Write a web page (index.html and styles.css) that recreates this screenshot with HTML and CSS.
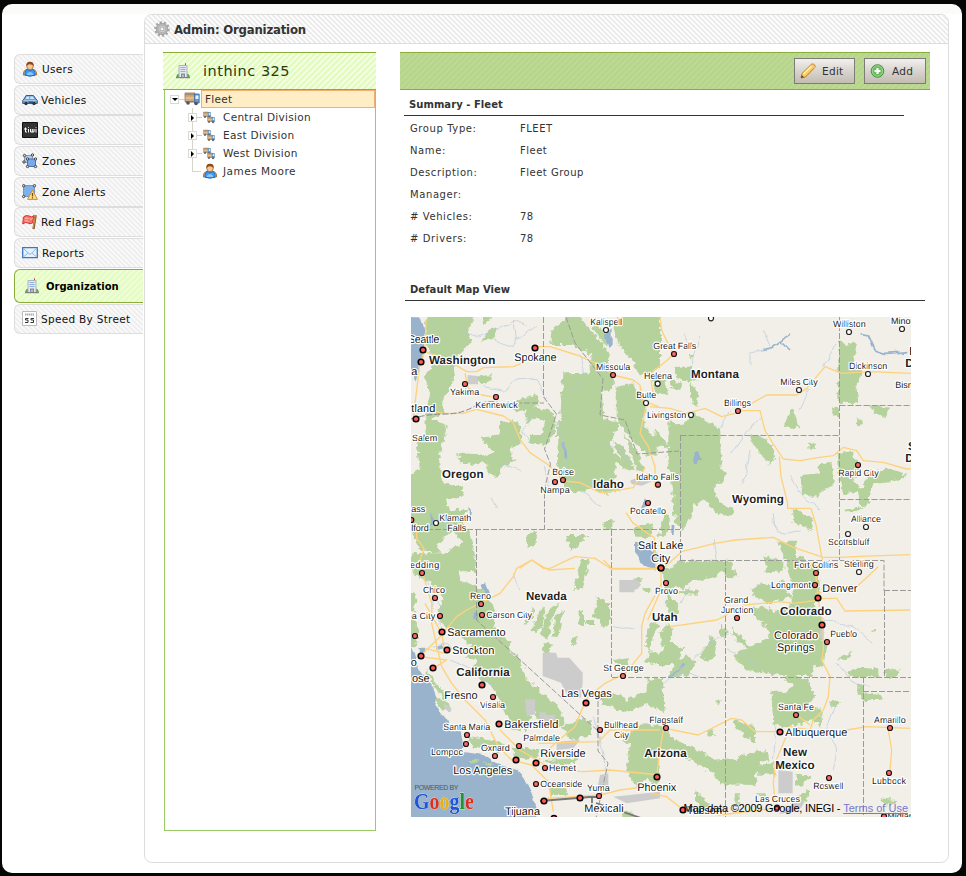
FILE: index.html
```html
<!DOCTYPE html>
<html lang="en">
<head>
<meta charset="utf-8">
<title>Admin: Organization</title>
<link rel="stylesheet" href="styles.css">
</head>
<body>
<svg class="sprites" width="0" height="0" aria-hidden="true">
  <defs>
    <linearGradient id="gold" x1="0" y1="0" x2="1" y2="1"><stop offset="0" stop-color="#fff6b0"/><stop offset="1" stop-color="#f5a81c"/></linearGradient>
    <symbol id="i-user" viewBox="0 0 16 16"><path d="M1.500 14Q1 9 5 8.500h6q4 .5 3.500 5.500z" fill="#f0b06a" stroke="#b5702c"/><path d="M3 14.200V11.500q.5-3 3-3L8 10l2-1.500q2.500 0 3 3v2.700q-5 2-10 0z" fill="#3e9bf5" stroke="#1c6fc8"/><path d="M5 12.500q3-3 6 0v1.500H5z" fill="#8bc6ff"/><ellipse cx="8" cy="5" rx="3.300" ry="3.800" fill="#f6c795" stroke="#a5652f" stroke-width=".8"/><path d="M4.300 5Q4 .7 8 .7T11.700 5Q10 3 7 3.300z" fill="#8a4a1e"/></symbol>
    <symbol id="i-car" viewBox="0 0 16 16"><path d="M.7 8.500L2 7 4 3.500h7.500L14 7l1.300 1.500v3H.7z" fill="#6b9fd6" stroke="#2f5f9b"/><path d="M4.800 4.500h2.500V7H3.400zM8.300 4.500h2.500L12.500 7H8.300z" fill="#cfe4f7"/><path d="M1.500 8.500h13" stroke="#a5cbec"/><circle cx="4" cy="11.500" r="1.700" fill="#333"/><circle cx="12" cy="11.500" r="1.700" fill="#333"/><path d="M6.500 9.500h4.500v1.500H6.500z" fill="#2c538a"/></symbol>
    <symbol id="i-tiwi" viewBox="0 0 16 16"><path d="M.5.5h15v15H.5z" fill="#333" stroke="#111"/><path d="M3.500 5.500v4.500h1.500M2 7h3M6.500 7v3.500M6.500 5.300v.7M8.500 7v3h3.500V7M10.300 7v3M14 7v3.500M14 5.300v.7" stroke="#fff" fill="none"/></symbol>
    <symbol id="i-zone" viewBox="0 0 16 16"><path d="M2.500 2.500h8v7h-8z" fill="#a9caf4" stroke="#8a9bb5"/><path d="M5.500 6h8v7.500h-8z" fill="#79a9ed" stroke="#4876b5"/><g fill="#ddd" stroke="#444"><circle cx="2.500" cy="2.500" r="1.200"/><circle cx="10.500" cy="2" r="1.200"/><circle cx="2" cy="9" r="1.200"/><circle cx="5.500" cy="6" r="1.200"/><circle cx="13.500" cy="6" r="1.200"/><circle cx="5.500" cy="13.500" r="1.200"/><circle cx="13.500" cy="13.500" r="1.200"/></g></symbol>
    <symbol id="i-alert" viewBox="0 0 16 16"><path d="M1.500 1.500h11v11h-11z" fill="#7fb0ee" stroke="#6a9ad8"/><g fill="#ddd" stroke="#444"><circle cx="1.700" cy="1.700" r="1.200"/><circle cx="12.500" cy="1.700" r="1.200"/><circle cx="1.700" cy="12.500" r="1.200"/></g><path d="M10.500 6l4.900 9.400H5.600z" fill="#ffdf86" stroke="#d78d24" stroke-linejoin="round"/><path d="M10.500 9v3.500M10.500 13.300v1.200" stroke="#74501b" stroke-width="1.300"/></symbol>
    <symbol id="i-flag" viewBox="0 0 16 16"><path d="M13.700 1l-2.200 14" stroke="#8f5d20" stroke-width="2.300"/><path d="M13.400 1l-2.200 13" stroke="#dba455" stroke-width=".8"/><path d="M12 1.500Q10 4 7 2 4 .5 1.500 3L.7 10Q4 7.500 6 9t4.500 0z" fill="#f1776f" stroke="#d8322d"/><path d="M3 4.500q2-1 3.500 0M3 7q2-.7 3.500.5M8 5q1.500.5 2.500-.5" stroke="#ffc2bc" fill="none"/></symbol>
    <symbol id="i-mail" viewBox="0 0 16 16"><path d="M.7 2.700h14.600v10H.7z" fill="#e6f2ff" stroke="#3c78bd" stroke-width="1.300"/><path d="M2 4l6 5.500L14 4M2 11.500l4-3.500M14 11.500L10 8" fill="none" stroke="#8cb8e6"/></symbol>
    <symbol id="i-org" viewBox="0 0 16 16"><path d="M1 14.500l1-3 2-1v4zM15 14.500l-1-3-2-1v4z" fill="#55a84c"/><path d="M4 2.500h8v12H4z" fill="#e3e9f3" stroke="#a5adb8" stroke-width=".9"/><path d="M5.500 4.500h5M5.500 6.500h5M5.500 8.500h5" stroke="#8cb1e3"/><path d="M6 14.500v-4h4v4z" fill="#858b93"/><path d="M7.200 14.500v-2.800h1.600v2.800z" fill="#c3cad1"/><path d="M10.500 2V.3" stroke="#d33"/><path d="M1 14.700h14" stroke="#777"/></symbol>
    <symbol id="i-speed" viewBox="0 0 16 16"><path d="M.5.5h14v14H.5z" fill="#fff" stroke="#bbb"/><path d="M3 3.500h9.500" stroke="#aaa" stroke-width="1.800" stroke-dasharray="1.400 .5"/><path d="M6.500 7.500h-3V9h2.500v2.500H3M12 7.500H9V9h2.500v2.500h-3" fill="none" stroke="#333"/></symbol>
    <symbol id="i-truck" viewBox="0 0 16 16"><path d="M1 2h10v8.500H1z" fill="#d3a878" stroke="#8d7152" stroke-width=".8"/><path d="M1.500 2.500h9v1.800h-9z" fill="#a98b6b"/><path d="M1.500 7h9" stroke="#eed2ad"/><path d="M10.500 3h4.700v9h-4.700z" fill="#5f9bd2" stroke="#3a6c9e" stroke-width=".8"/><path d="M11.500 4.500h3v3.500h-3z" fill="#def2ff"/><path d="M1 11h10" stroke="#777"/><circle cx="4" cy="12" r="1.800" fill="#555"/><circle cx="12" cy="12.500" r="1.800" fill="#555"/></symbol>
    <symbol id="i-gear" viewBox="0 0 16 16"><circle cx="8" cy="8" r="6.600" fill="none" stroke="#aaa" stroke-width="2.500" stroke-dasharray="2.200 1.900"/><circle cx="8" cy="8" r="4.500" fill="#ddd" stroke="#b5b5b5" stroke-width="3"/><circle cx="8" cy="8" r="5.800" fill="none" stroke="#8e8e8e" stroke-width=".5"/><circle cx="8" cy="8" r="2" fill="#f5f5f5" stroke="#999" stroke-width=".8"/></symbol>
    <symbol id="i-pencil" viewBox="0 0 16 16"><path d="M1 15l1-4.500L11.500 1.200q2-.8 3.300 1 .8 1.500-.2 2.500L5.500 14z" fill="url(#gold)" stroke="#c77a1b"/><path d="M3.500 11l8-8" stroke="#fff4a3" stroke-width="1.500"/><path d="M11 2.500l3 3 1-1.500-2.500-2.500z" fill="#f6c4a2"/><path d="M1 15l.8-3L4 14.300z" fill="#6b3c15"/></symbol>
    <symbol id="i-add" viewBox="0 0 16 16"><circle cx="7.500" cy="8" r="6.300" fill="#6cbd60" stroke="#499342"/><circle cx="7.500" cy="8" r="5.200" fill="none" stroke="#a6dd9c" stroke-width=".8"/><path d="M7.500 5v6M4.500 8h6" stroke="#fff" stroke-width="2.200"/></symbol>
  </defs>
</svg>

<div class="page">
  <nav class="side">
    <a class="tab"><svg class="ico"><use href="#i-user"/></svg><span>Users</span></a>
    <a class="tab near"><svg class="ico"><use href="#i-car"/></svg><span>Vehicles</span></a>
    <a class="tab"><svg class="ico"><use href="#i-tiwi"/></svg><span>Devices</span></a>
    <a class="tab"><svg class="ico"><use href="#i-zone"/></svg><span>Zones</span></a>
    <a class="tab"><svg class="ico"><use href="#i-alert"/></svg><span>Zone Alerts</span></a>
    <a class="tab near"><svg class="ico"><use href="#i-flag"/></svg><span>Red Flags</span></a>
    <a class="tab"><svg class="ico"><use href="#i-mail"/></svg><span>Reports</span></a>
    <a class="tab active"><svg class="ico"><use href="#i-org"/></svg><span>Organization</span></a>
    <a class="tab near"><svg class="ico"><use href="#i-speed"/></svg><span>Speed By Street</span></a>
  </nav>

  <main class="panel">
    <header class="title"><svg class="ico"><use href="#i-gear"/></svg><h1>Admin: Organization</h1></header>
    <div class="content">
      <section class="tree">
        <div class="tree-head"><svg class="ico"><use href="#i-org"/></svg><h2>inthinc 325</h2></div>
        <div class="tree-body">
          <div class="node root"><i class="toggle open"></i><svg class="ico"><use href="#i-truck"/></svg><span class="picked">Fleet</span></div>
          <div class="kids">
            <div class="node"><i class="toggle"></i><span class="pair"><svg><use href="#i-truck"/></svg><svg><use href="#i-truck"/></svg></span><span>Central Division</span></div>
            <div class="node"><i class="toggle"></i><span class="pair"><svg><use href="#i-truck"/></svg><svg><use href="#i-truck"/></svg></span><span>East Division</span></div>
            <div class="node"><i class="toggle"></i><span class="pair"><svg><use href="#i-truck"/></svg><svg><use href="#i-truck"/></svg></span><span>West Division</span></div>
            <div class="node leaf"><i class="elbow"></i><svg class="ico"><use href="#i-user"/></svg><span>James Moore</span></div>
          </div>
        </div>
      </section>

      <section class="detail">
        <div class="bar">
          <button class="btn edit"><svg class="ico"><use href="#i-pencil"/></svg>Edit</button>
          <button class="btn add"><svg class="ico"><use href="#i-add"/></svg>Add</button>
        </div>
        <h3 class="summary">Summary - Fleet</h3>
        <dl>
          <dt>Group Type:</dt><dd>FLEET</dd>
          <dt>Name:</dt><dd>Fleet</dd>
          <dt>Description:</dt><dd>Fleet Group</dd>
          <dt>Manager:</dt><dd></dd>
          <dt># Vehicles:</dt><dd>78</dd>
          <dt># Drivers:</dt><dd>78</dd>
        </dl>
        <h3 class="mapview">Default Map View</h3>
        <div class="map">
<svg class="canvas" viewBox="411 317 500 500" width="500" height="500">
  <defs>
    <filter id="rough" x="0" y="0" width="1" height="1" color-interpolation-filters="sRGB"><feTurbulence type="fractalNoise" baseFrequency=".2" numOctaves="2" seed="4"/><feDisplacementMap in="SourceGraphic" scale="7" xChannelSelector="R" yChannelSelector="G"/></filter>
    <filter id="rough2" x="0" y="0" width="1" height="1" color-interpolation-filters="sRGB"><feTurbulence type="fractalNoise" baseFrequency=".08" numOctaves="2" seed="9"/><feDisplacementMap in="SourceGraphic" scale="6" xChannelSelector="R" yChannelSelector="G"/></filter>
    <g id="t"><circle r="7.500" fill="#f66" stroke="#111" stroke-width="3.500"/></g>
    <g id="T"><circle r="8.500" fill="#f55" stroke="#000" stroke-width="4.500"/></g>
    <g id="o"><circle r="7.500" fill="#fff" stroke="#222" stroke-width="3.500"/></g>
  </defs>
  <path class="land" d="M411 317h500v500H411z"/>
  <g filter="url(#rough)">
    <path fill="none" d="M401 307h520v520H401z"/>
    <g class="green">
      <g transform="translate(400 310) scale(.33333)">
        <path d="M80 0H232L205 60 215 95 180 130 160 165 165 200 150 230 125 280 135 310 90 325 140 345 130 400 115 440 125 480 130 520 185 530 190 555 140 570 150 600 200 600 190 640 215 680 225 740 190 700 160 660 110 700 120 730 60 720 23 640 23 500 60 480 50 400 80 370 75 320 90 250 75 200 110 150 75 100z"/>
        <path d="M240 0H300L250 45zM265 60l30-10-10 30-45 20zM225 200l50-5 0 20-30 10zM335 280l70-30 15 30-35 20-40 10z"/>
        <path d="M390 290l55 10 25 20-10 60-25 25-50-10 10-20 30 0 10-40-25-15-30 25-5-30z"/><path d="M300 340l50-8 15 30-60 18zM240 385l60-12 0-25 60 0 5 50-35 20 15 35-40 20-10 30-30-15 0-30-85 5-5-20 20-10 45 8 45-15z"/><path d="M170 430l60 2 40 20-50 10z"/>
        <path d="M455 60l35-25 40 20 45 50-15 20-45-20-65 0z"/><path d="M490 190l70-2 45 30 5 110 50 10-30 60 20 55-10 70 25 20-50 10-50-20-20 15-50-10-20-70-5-110 10-30z"/>
        <path d="M500 12l40 10 50 60 40 50-10 30-45-20-40-50-45-50zM640 60l10-48h130v160l-60 25-25-50-30-30z"/><path d="M575 140l50 20 20 60-20 30-60-50zM650 230l50-10 40 70-10 50 40 50 0 50-30-5-60-65-30-40z"/>
        <path d="M590 40l30 40 0 30-40-50zM470 340l15 30 10 80-15-10zM610 400l45 40 50 40-20 5-50-40zM640 390l30 20 30 60-10 10-30-40zM670 370l45 60 20 60-25-10zM610 630h30l-5 30-20 0zM695 655l65-15-10 40-40 0zM385 665h30l-10 40-25 5zM495 675h70l-20 20-30 25z"/>
      </g>
      <g transform="translate(650 310) scale(.33333)">
        <path d="M75 170h50l20 40-40 5-30-20zM5 200l40 5 10 50-40-10zM60 210l40 10-10 20-30-10zM120 215l25 30-5 45-15-10zM15 355l35 45 30 10-70 0zM115 130l20 5-15 10z"/>
        <path d="M55 330l45 15 30-35 80 45 5 70-5 55 20 10-15 25-25 15 15 45 45 25-5 20-50-10-30-40-35 15-10 40-20 35-25-20 5-50-15-60-15-90 5-30z"/>
        <path d="M300 375h30l35 30 10 50-15 10-30-35-25-35zM400 350l28-55 20 60zM565 90l25 15 30-10 0 30-20 45 35 5-15 65 5 35-20 5-40-3z"/>
        <path d="M455 495l50-5 5-30 38-5 0 75-35 15-10 20-45-15zM478 398h20v18h-20zM560 430l40-10 30 45-5 40-20 5 30 25 20-45 60-15 55 20-20 15-80 10-20 70-20-5-10-40-40 10-15-60zM425 595l65 35-5 30-55-25zM385 695l50 0 5 60-40-10zM655 285l65 8-15 30-30-15zM580 600l60-10-30 22zM550 290l15 10 0 20-15-5zM620 320l20 20-15 10z"/>
        <path d="M45 605l15 20-10 55-25 0zM5 690l30 60-30 10zM65 540l20 60-15 20zM80 752h165v35H60zM340 735l60 20 0 30h-50z"/>
      </g>
      <g transform="translate(400 560) scale(.33333)">
        <path d="M33-20l90 0 90-40 20 100-60-10 10 30 40 15 30 20 30 50 0 60 40 50 20 40 30 60 -5 60 20 60-50-35-20-60-50-20 0-50-70-20 20-30-60-50-40-20-5-40 20-30-40-50-50-25z"/>
        <path d="M205 230l80-10 60 75 0 60 40 60 5 55-10 40-40 0-40-90-30-45-60-40 20-30z"/><path d="M20 90l27 10-5 60-22 0zM20 150l30 40 5 60-35 20zM80 330l60 80-5 15-55-80zM100 405l50 30 0 20-35-15z"/>
        <path d="M330 275l30 20 20 65 30 20 40 40 20 10 25 60-20 15-60-25-30-50-60-70-15-50z"/><path d="M275 215l30 10 30 30-20 10z"/>
        <path d="M390 155l15-15-5 40-30 15zM420 150l15-10-10 60-20 20-10-10zM440 155l35-25-20 50-10 60-25-15zM465 170l25-20-15 80-15 0zM535 150h17v45h-15zM590 110l25 10-10 60-25-10zM545 0h25l-25 85-25 5zM430 250l28 0-15 35-12-5zM515 230h23l-20 35zM555 180l30 0 0 15-30 0z"/>
        <path d="M200 530l100 15 25 15-20 15-85-15zM335 560l85 8-10 25-65 5zM485 500l60-25 30 10 0 40-60 15zM430 600l110-5-15 18-70 0zM440 670l60 15 5 20-50 0z"/>
      </g>
      <g transform="translate(600 540) scale(.33333)">
        <path d="M185 90l40-10 25-20 100 3 15 10-10 35-60 15-25 0-20 25-20-10-20 10 0 20 25 30-5 40-20 0-10-40z"/><path d="M235 150l60 2-3 12-50-2zM130 140l25 5-5 12-20-2zM105 115l18 0-2 12-15 0z"/>
        <path d="M150 245l30 10-20 30-10 50-15-20zM180 280l25-30 15 15-10 50-25 0zM205 300l45 25-20 50-60 0-35-10 20-35 20 15zM260 345l25 25 40-60 5-25 20 20-5 40-20 20-30-10-30 50-60 5 30-50zM360 250l20 20-5 30-15-10zM40 360l45-5 0 20-40 0zM0 180l30 10 0 60-25 10z"/>
        <path d="M370 100l25-20 20 25-30 10zM450 150l35-20 45 10 15-20 30 50-70 20-40-20z"/><path d="M435 205l60-5 30 15 60-15 45 45-10 40 60 20-10 80-60-20-100-25-80-15 60-15 20-20-20-40z"/>
        <path d="M395 265l40 35 20 30-50-30zM400 345l40-20 60-30 40 40 100 20 0 50-100 0-100-15z"/>
        <path d="M0 460l50 0 30 20 60-30 0-30 45-5 10 105-60-30-55 30-80-30z"/><path d="M345 485l20-5-10 15z"/>
      </g>
      <g transform="translate(600 680) scale(.33333)">
        <path d="M135 130l60 10 25 40 60 20 65 40 30-5 35 5 15-15 45-5 15 45-20 20 5 30-110-2-20-35-50-25-70-45-50 0 5 50 5 40-10 15-30-15-30 20-20-25-10-30 10-70-30-20z"/>
        <path d="M105 150l25 5 5 35-20 10zM320 155l15-8 10 20-25 5zM405 120l60 20 0 45-30-15-30-30zM440 220l60-10 5 35-20-5-40 0zM470 255l50-5 10 40-30-10-25 5zM285 330l45 45-15 15-30-30zM405 340l15 0-5 40-12-20zM70 395l30 0 0 20-30 0zM470 340l30 0 -10 15z"/>
      </g>
      <g transform="translate(650 560) scale(.33333)">
        <path d="M405 0l50-10 50 30 5 80-20 30 30 60 0 60-30 10-90-50-50 0-10-50 80-10 10-60z"/>
        <path d="M365 395l40 0 30-20-35-20 20-15 55 20 20 50-20 25 40 15 0 50-30-20-60 20-55-5zM400 270l50-20 40 30-30 30-40 0zM595 335l40-15 50 5 0 28-85-3zM705 328l45 0-15 25-28 0zM625 370l15 15 0 15 55 5 0 15-55 0-15-20zM540 430l30-10-10 20-20 0zM570 290l40-15-20 25-25-2zM665 210l10-3 0 8z"/>
        <path d="M440 710l40-20-10 40zM440 640l45 10-30 25-20 10zM690 715l50 5-30 20z"/>
      </g>
    </g>
  </g>
  <g class="grey" transform="translate(400 310) scale(.33333)"><path d="M203 195l28 3 4 25-32 0zM690 512l60-25 10 25-35 15-30-5z"/></g>
  <g class="grey" transform="translate(400 560) scale(.33333)"><path d="M428 278h40l5 15h35l40 45v30l-5 45-40-5-20-40-55-20zM658 60h42l0-6 15 8 8 12-10 12-10 4v7h-45zM375 418h30v45l-25 5zM418 457l20 0 0 8 28 0 0 18-48 0zM600 645l25-5 0 40-35 15zM470 545l70-5-20 25-50 5zM640 710l140-15v20l-100 15zM130 430l25 15-5 12-15-10z"/></g>
  <g class="grey" transform="translate(650 560) scale(.33333)"><path d="M385 630l43 5 0 65-43 0zM430 722l35 0-10 20-30 15-40 5 35-20zM510 195l10 0 0 45-10-10z"/></g>
  <g filter="url(#rough2)">
    <path fill="none" d="M401 307h520v520H401z"/>
    <g transform="translate(400 560) scale(.33333)">
      <path class="water" d="M0 245l35 20 25 65 40 55 8 30 -5 20 30 35 20 30 30 20 5 25 -3 30 30 5 35 5 30 20 30 10 40 15 20 20 30 60 10 60 5 40H0z"/>
      <path class="water" d="M55 260l20 0 0 25-15 10zM245 75l10-5 12 30-12 5zM222 155l10 5-2 22-10-5zM108 260l15-5 5 10-18 5z"/>
      <path class="green" d="M205 600l30 0-10 10zM245 606l38 5-10 6z"/>
    </g>
    <g class="water" transform="translate(400 310) scale(.33333)"><path d="M25 22l38 0 10 40 0 60-15 50-10 40-13-20-10-50zM615 75l20-20 0 50-10 5zM705 695l30 5 25 30 10 50-45-20-20-35zM488 400l8 0 3 45-8-5zM735 565l10 15-10 12-15 3zM90 605l15 30-10 15zM205 590l8 10-5 30z"/></g>
    <g class="water" transform="translate(650 310) scale(.33333)"><path d="M128 425l12-5 8 20 10 10-15 0-5 15-12-5zM65 645l8 0-2 30-8 0z"/></g>
    <g class="stream">
      <g transform="translate(650 310) scale(.33333)"><path class="wide" d="M340 118l25-5 40-30 15-10M390 90l30 30M630 70l25 5 20 45 30 10 70-5"/><path d="M300 165l0-35 60-15M150 75l-30 110M560 100l-20 30-20 40M245 430l40-60 50-50M300 420l-10 70-20 30M370 610l5 50 30 10 50-10M420 500l30 50 60 50M190 690l10 70M340 60l20 50M480 240l-30 60M240 300l-30 60M100 70l20 50"/></g>
      <g transform="translate(400 310) scale(.33333)"><path d="M180 60l50 20 60-20 60-30 30 20M250 230l60 10 40-30 60-5 30 60M280 90l60 20 15-30M400 310l-30 50 20 40M470 330l30 100-5 60M430 470l20 80M140 180l30-30M340 30l10 60 60-40M600 400l70 20 20 50M520 480l20 60 60 50M540 130l10 60-30 60M100 30l5 60-20 60M300 460l60 20M270 560l20 30"/></g>
      <g transform="translate(400 560) scale(.33333)"><path d="M70 20l20 60 30 60 5 70M100 90l-10 90M140 260l60 20 40-10M150 300l70 30 60-5M90 260l50-10 30 30M340 40l20 50M220 340l60 40M580 470l20 70 20 100M640 200l60 10"/></g>
      <g transform="translate(650 560) scale(.33333)"><path class="wide" d="M55 350l30-15 20-25"/><path d="M0 430l40-60 30-30 60-40 60-60 50-20M230 270l60 20 40 30M560 430l-30 80 30 60-10 60M510 170l100 30 60 50M420 130l0 60M380 500l-10 100M560 310l40 50 60 20M120 80l-30 50M70 350l50-10 50 20"/></g>
    </g>
  </g>
  <g class="road">
    <g transform="translate(400 310) scale(.33333)"><path d="M78 30L75 120 60 160 40 320M75 125l40 15 60 30 25 15 30 0 20-12 90-3 30-12 35-30M410 110l40 0 80 25 60 25 50 35 60 15 20 15 5 45 50 20M195 190l10 45 40 20 30 5M50 310l40-10 40 10 60 0 40-12 80 20 30 20 20 50 30 40 60 40 40 45 50 5 60 30 10 0 90-15 35-60M678 608l20 30 50 35 15 10 5 90M725 250l15 30-20 90 25 40 20 60 0 60M50 640l0 45 22 30-15 45M360 775l35-25 35 25 20 0M450 775l75-35 60 5 50 32 130 0"/></g>
    <g transform="translate(650 310) scale(.33333)"><path d="M30 22l5 40 15 30 20 40-20 20-50 40 10 60M0 290l60 5 50 15 55-15 50 25 40-10 25-8 50 0 15 60 25 40 30 45 50 5 60-10 40-5 30-25 40 10 20 30 60 5 70 20 80-3M270 300l80-45 90 0 30-20 55-65 50 20 90-5 120 5M388 440l5 60 20 80 0 15 70 0 15 50 20 110M45 770l50-45 100-25 60-10 115-8 60 30 90 30 50 0 60-3 150-5"/></g>
    <g transform="translate(400 560) scale(.33333)"><path d="M65 30l30 100 0 60 30 130 30 50 40 50 60 60 40 80 40 40 60 15 50 50 15 90M240 130l-40 20-30 20-50 60-50 50M240 130l60-30 40-50 10-25 45-25 50 30 80-5M75 130l50 90 10 60-60-15M300 510l60 60 100 60 90 5 80-5 150 15M405 610l60-60 60-50 20-50 20-40 50-40 60-30 50-60 0-80 10-40 50-90M60 290l80 10-40 25M415 550l180-5 35-35 150 0M440 715l160-10 60-15 120-15M610 0l25 25 145 0"/></g>
    <g transform="translate(650 560) scale(.33333)"><path d="M60 200l140-20 20-10 60-35 110-10 40 5 80-10M495 20l10 100 15 80 0 70-5 30 25 50-5 60-15 40-30 30-10 30-60-10-20 50-25 60-5 60 5 50M33 20l0 70-40 90M500 115l60 0 25 38 195-3M495 100l40-5 80-10 70-65M45 505l100 20 100-50 30 5 40 35 65 0M440 465l40 30M590 510l60-10 130 5M715 510l10 60-5 60M0 700l50 10 50 40 110 15 160-20M40 510l-10 60-10 80"/></g>
  </g>
  <g class="state">
    <path d="M543.500 317v80l13 17-12 35 6 15-6 25v40M411 529.500h269M476.500 530v90L598 731v20l10 12-12 55M611.500 530v147M612 677.500h299M680.500 435v125M680.500 435.500h159M839.500 317v243M839.500 405.500H911M839.500 499.500H911M680 560.500h204v30M884.500 590v87M884 590.500h27M725.500 560v257M863.500 677v138M863 691.500h48M566 317l9 26 28 36 -3 36 25 5 12 34 42-3M500 403l44-0M598 731l0-30 14-10"/>
    <path class="border" d="M540 801l50-4 8 0M592 797v8M596 803l48 16"/>
    <path class="river" d="M411 419q15-5 34-5t33-10q12-4 22-1"/>
  </g>
  <g class="names">
    <g transform="translate(400 310) scale(.33333)">
      <text class="m" x="24" y="100" textLength="94">Seattle</text><text class="b" x="87" y="161" textLength="199">Washington</text><text class="m" x="34" y="195">a</text><text class="s" x="150" y="255" textLength="88">Yakima</text><text class="s" x="226" y="294" textLength="127">Kennewick</text><text class="m" x="343" y="154" textLength="127">Spokane</text><text class="s" x="571" y="45" textLength="95">Kalispell</text><text class="s" x="588" y="181" textLength="103">Missoula</text><text class="s" x="709" y="264" textLength="60">Butte</text><text class="m" x="34" y="306" textLength="72">tland</text><text class="s" x="36" y="393" textLength="76">Salem</text><text class="b" x="126" y="504" textLength="125">Oregon</text><text class="s" x="457" y="495" textLength="65">Boise</text><text class="s" x="421" y="549" textLength="88">Nampa</text><text class="b" x="579" y="533" textLength="93">Idaho</text><text class="s" x="34" y="606">ass</text><text class="s" x="118" y="632" textLength="96">Klamath</text><text class="s" x="142" y="663">Falls</text><text class="s" x="34" y="663">lford</text><text class="s" x="708" y="510" textLength="129">Idaho Falls</text><text class="s" x="690" y="612" textLength="108">Pocatello</text><text class="m" x="714" y="717" textLength="136">Salt Lake</text><text class="m" x="754" y="755">City</text><text class="s" x="30" y="774" textLength="88">edding</text><text class="s" x="732" y="207" textLength="84">Helena</text><text class="s" x="741" y="324" textLength="118">Livingston</text>
      <use href="#T" x="69" y="120"/><use href="#T" x="63" y="156"/><use href="#t" x="195" y="222"/><use href="#t" x="288" y="261"/><use href="#T" x="405" y="114"/><use href="#o" x="618" y="60"/><use href="#t" x="639" y="195"/><use href="#o" x="773" y="221"/><use href="#o" x="738" y="279"/><use href="#T" x="48" y="327"/><use href="#t" x="465" y="516"/><use href="#t" x="489" y="510"/><use href="#t" x="774" y="524"/><use href="#t" x="744" y="579"/><use href="#t" x="34" y="630"/><use href="#o" x="108" y="639"/><use href="#T" x="783" y="774"/>
    </g>
    <g transform="translate(650 310) scale(.33333)">
      <text class="s" x="10" y="117" textLength="129">Great Falls</text><text class="b" x="123" y="203" textLength="144">Montana</text><text class="s" x="391" y="225" textLength="112">Miles City</text><text class="s" x="222" y="288" textLength="81">Billings</text><text class="s" x="549" y="51" textLength="98">Williston</text><text class="s" x="723" y="42">Minot</text><text class="s" x="597" y="177" textLength="115">Dickinson</text><text class="s" x="736" y="234">Bismarck</text><text class="b" x="778" y="135">N</text><text class="b" x="766" y="171">Dakota</text><text class="b" x="774" y="419">S</text><text class="b" x="766" y="456">Dakota</text><text class="s" x="565" y="498" textLength="121">Rapid City</text><text class="b" x="246" y="579" textLength="156">Wyoming</text><text class="s" x="603" y="636" textLength="90">Alliance</text><text class="s" x="534" y="705" textLength="124">Scottsbluff</text><text class="s" x="432" y="774" textLength="133">Fort Collins</text><text class="s" x="582" y="772" textLength="89">Sterling</text>
      <use href="#o" x="183" y="25"/><use href="#t" x="72" y="132"/><use href="#o" x="123" y="315"/><use href="#t" x="264" y="303"/><use href="#o" x="447" y="240"/><use href="#o" x="597" y="66"/><use href="#o" x="756" y="57"/><use href="#o" x="654" y="192"/><use href="#t" x="624" y="465"/><use href="#o" x="648" y="651"/><use href="#o" x="594" y="672"/>
    </g>
    <g transform="translate(400 560) scale(.33333)">
      <text class="s" x="69" y="99" textLength="66">Chico</text><text class="s" x="210" y="117" textLength="63">Reno</text><text class="b" x="378" y="119" textLength="122">Nevada</text><text class="s" x="20" y="176" textLength="86">ba City</text><text class="s" x="259" y="174" textLength="137">Carson City</text><text class="m" x="142" y="227" textLength="175">Sacramento</text><text class="m" x="157" y="281" textLength="126">Stockton</text><text class="m" x="32" y="318">o</text><text class="m" x="36" y="365">ose</text><text class="b" x="169" y="347" textLength="160">California</text><text class="m" x="133" y="416" textLength="100">Fresno</text><text class="s" x="240" y="444" textLength="75">Visalia</text><text class="m" x="313" y="503" textLength="162">Bakersfield</text><text class="s" x="130" y="510" textLength="141">Santa Maria</text><text class="s" x="93" y="585" textLength="96">Lompoc</text><text class="s" x="243" y="573" textLength="86">Oxnard</text><text class="s" x="370" y="543" textLength="110">Palmdale</text><text class="m" x="421" y="590" textLength="136">Riverside</text><text class="m" x="160" y="641" textLength="177">Los Angeles</text><text class="s" x="447" y="633" textLength="81">Hemet</text><text class="s" x="421" y="681" textLength="126">Oceanside</text><text class="s" x="561" y="693" textLength="68">Yuma</text><text class="m" x="553" y="755" textLength="118">Mexicali</text><text class="m" x="315" y="764" textLength="105">Tijuana</text><text class="m" x="484" y="410" textLength="151">Las Vegas</text><text class="s" x="610" y="333" textLength="121">St George</text><text class="s" x="612" y="504" textLength="102">Bullhead</text><text class="s" x="642" y="534" textLength="45">City</text><text class="s" x="748" y="489" textLength="101">Flagstaff</text><text class="b" x="733" y="591" textLength="127">Arizona</text><text class="m" x="712" y="692" textLength="117">Phoenix</text><text class="b" x="756" y="182" textLength="77">Utah</text>
      <use href="#t" x="66" y="39"/><use href="#t" x="105" y="114"/><use href="#t" x="243" y="132"/><use href="#t" x="246" y="165"/><use href="#t" x="120" y="168"/><use href="#T" x="126" y="216"/><use href="#t" x="45" y="228"/><use href="#T" x="141" y="270"/><use href="#T" x="63" y="288"/><use href="#T" x="99" y="324"/><use href="#T" x="246" y="375"/><use href="#t" x="279" y="411"/><use href="#T" x="297" y="492"/><use href="#t" x="201" y="525"/><use href="#t" x="198" y="552"/><use href="#t" x="285" y="588"/><use href="#t" x="357" y="558"/><use href="#T" x="348" y="600"/><use href="#T" x="408" y="609"/><use href="#t" x="435" y="624"/><use href="#t" x="408" y="672"/><use href="#T" x="432" y="723"/><use href="#T" x="540" y="714"/><use href="#t" x="597" y="708"/><use href="#t" x="669" y="348"/><use href="#T" x="558" y="429"/><use href="#t" x="600" y="510"/><use href="#T" x="771" y="651"/><use href="#T" x="462" y="775"/>
    </g>
    <g transform="translate(650 560) scale(.33333)">
      <text class="s" x="15" y="102" textLength="69">Provo</text><text class="s" x="222" y="129" textLength="73">Grand</text><text class="s" x="213" y="159" textLength="97">Junction</text><text class="s" x="363" y="84" textLength="120">Longmont</text><text class="m" x="517" y="96" textLength="105">Denver</text><text class="b" x="390" y="165" textLength="155">Colorado</text><text class="m" x="372" y="236" textLength="132">Colorado</text><text class="m" x="381" y="272" textLength="112">Springs</text><text class="s" x="541" y="231" textLength="80">Pueblo</text><text class="s" x="384" y="450" textLength="108">Santa Fe</text><text class="m" x="406" y="527" textLength="186">Albuquerque</text><text class="b" x="399" y="588" textLength="72">New</text><text class="b" x="376" y="626" textLength="118">Mexico</text><text class="s" x="672" y="489" textLength="95">Amarillo</text><text class="s" x="666" y="671" textLength="102">Lubbock</text><text class="s" x="490" y="687" textLength="90">Roswell</text><text class="s" x="315" y="726" textLength="135">Las Cruces</text><text class="m" x="110" y="761" textLength="106">Tucson</text><text class="s" x="712" y="778">Midland</text>
      <use href="#T" x="33" y="24"/><use href="#t" x="48" y="69"/><use href="#t" x="498" y="39"/><use href="#o" x="627" y="36"/><use href="#t" x="495" y="75"/><use href="#T" x="504" y="114"/><use href="#t" x="261" y="174"/><use href="#T" x="516" y="195"/><use href="#t" x="531" y="246"/><use href="#t" x="438" y="465"/><use href="#T" x="390" y="516"/><use href="#t" x="48" y="504"/><use href="#t" x="720" y="504"/><use href="#t" x="717" y="639"/><use href="#t" x="537" y="654"/><use href="#t" x="381" y="743"/><use href="#T" x="99" y="750"/><use href="#t" x="702" y="769"/>
    </g>
  </g>
  <text class="powered" x="414.500" y="790" textLength="44">POWERED BY</text>
  <text class="google" x="414" y="809" textLength="60" lengthAdjust="spacingAndGlyphs"><tspan fill="#1f55d8">G</tspan><tspan fill="#d8301f">o</tspan><tspan fill="#e8b010">o</tspan><tspan fill="#1f55d8">g</tspan><tspan fill="#1f9630">l</tspan><tspan fill="#d8301f">e</tspan></text>
</svg>
          <div class="credit">Map data ©2009 Google, INEGI - <a>Terms of Use</a></div>
        </div>
      </section>
    </div>
  </main>
</div>
</body>
</html>
```
FILE: styles.css
```css
* { box-sizing: border-box; }
body {
  margin: 0;
  height: 876px;
  padding: 4px 4px 3px 2px;
  background: #060606;
  color: #333;
  font: 10.5px/18px "DejaVu Sans", sans-serif;
  letter-spacing: .3px;
  overflow: hidden;
}
h1, h2, h3, dl, dd { margin: 0; }
.sprites { display: block; height: 0; }
.ico { width: 16px; height: 16px; flex: none; }

.page {
  display: flex;
  height: 869px;
  padding: 10px 13px 0 12px;
  background: linear-gradient(#fbfbf9 10px, #fff 10px);
  border-radius: 10px;
}

/* Side navigation */
.side { width: 129px; padding-top: 40px; display: flex; flex-direction: column; gap: .7px; }
.tab {
  display: flex;
  align-items: center;
  gap: 4px;
  height: 30px;
  padding-left: 7px;
  color: #111;
  white-space: nowrap;
  border: 1px solid #ddd;
  border-right: 0;
  border-radius: 6px 0 0 6px;
  background: linear-gradient(45deg, #fafafa 6%, #eee 19% 31%, #fafafa 44% 56%, #eee 69% 81%, #fafafa 94%) 0 0 / 5px 5px;
}
.tab.near { gap: 3px; }
.tab.active {
  height: 34.500px;
  padding-left: 9px;
  gap: 6px;
  color: #000;
  font-weight: bold;
  font-size: 10px;
  letter-spacing: 0;
  border-color: #8aad3c;
  background: linear-gradient(-45deg, #f0fedd 10%, #e5fdc5 10% 50%, #f0fedd 50% 60%, #e5fdc5 60%) 0 0 / 6px 6px;
}
.tab.active span { padding-top: 1px; }

/* Main panel */
.panel { width: 805px; height: 849px; margin-left: 1px; border: 1px solid #ddd; border-radius: 8px; overflow: hidden; }
.title {
  display: flex;
  align-items: center;
  gap: 4px;
  height: 29px;
  padding-left: 9px;
  border-bottom: 1px solid #ddd;
  background: linear-gradient(45deg, #fff 6%, #eaeaea 19% 31%, #fff 44% 56%, #eaeaea 69% 81%, #fff 94%) 0 0 / 5px 5px;
}
.title h1 { font: bold 13px/18px "DejaVu Sans Condensed", "DejaVu Sans", sans-serif; letter-spacing: -.2px; padding-top: 1px; }
.content { display: flex; gap: 24px; padding: 8px 0 0 18px; }

/* Tree */
.tree { width: 213px; }
.tree-head {
  display: flex;
  align-items: center;
  gap: 12px;
  height: 38px;
  padding-left: 12px;
  border-top: 1px solid #8aad3c;
  border-bottom: 1px solid #8aad3c;
  background: linear-gradient(-45deg, #f7ffea 10%, #e4fcc2 10% 50%, #f7ffea 50% 60%, #e4fcc2 60%) 0 0 / 6px 6px;
}
.tree-head h2 { font-weight: normal; font-size: 14.500px; letter-spacing: .5px; color: #2a3a10; }
.tree-body { height: 741px; margin-left: 1px; border: 1px solid #9c6; border-top: 0; }
.node { display: flex; align-items: center; height: 18px; white-space: nowrap; }
.root { padding-left: 5px; }
.toggle { position: relative; width: 9px; height: 9px; flex: none; border: 1px solid #d9d9d0; background: #fff; }
.toggle::before { content: ""; position: absolute; left: 2px; top: 1px; border-left: 3px solid #000; border-top: 3px solid transparent; border-bottom: 3px solid transparent; }
.toggle.open::before { left: 1px; top: 2px; border: 3px solid transparent; border-top: 3px solid #000; border-bottom: 0; }
.toggle::after { content: ""; position: absolute; left: 8px; top: 3px; width: 5px; height: 1px; background: #d0d0c8; }
.root .ico { margin: 0 1px 0 5px; }
.picked { flex: 1; height: 18px; padding-left: 3px; line-height: 17px; border: 1px solid #f0b070; background: #ffedc6; }
.kids { margin-left: 27px; background: linear-gradient(#d5d5cc, #d5d5cc) 0 0 / 1px 64px no-repeat; }
.kids .toggle { margin-left: -4px; }
.pair { position: relative; width: 12px; height: 13px; margin: 0 8px 0 6px; flex: none; }
.pair svg { position: absolute; left: 0; top: 0; width: 8px; height: 8px; }
.pair svg + svg { left: 4px; top: 5px; }
.elbow { width: 9px; height: 1px; background: #d5d5cc; }
.leaf .ico { margin: 0 5px 0 1px; }
.leaf span { letter-spacing: .5px; }

/* Detail */
.detail { width: 530px; }
.bar {
  display: flex;
  justify-content: flex-end;
  align-items: center;
  gap: 9px;
  height: 38px;
  padding-right: 4px;
  border-top: 1px solid #8aad3c;
  border-bottom: 1px solid #8aad3c;
  background: linear-gradient(-45deg, #bfda98 10%, #b8d58c 10% 50%, #bfda98 50% 60%, #b8d58c 60%) 0 0 / 6px 6px;
}
.btn {
  display: flex;
  align-items: center;
  gap: 6px;
  width: 61px;
  height: 26px;
  padding: 0 0 0 5px;
  color: #333;
  font: inherit;
  letter-spacing: .3px;
  border: 1px solid #7d7d78;
  background: linear-gradient(#f2f0ee, #d8d4cf 50%, #c3bcb2);
}
.btn.add { width: 62px; }
.detail h3 { font-size: 10px; font-weight: bold; letter-spacing: .05px; border-bottom: 1px solid #333; }
.summary { width: 500px; height: 26px; margin-left: 4px; padding: 6px 0 0 5px; }
.mapview { width: 520px; height: 21px; margin: 30px 0 0 5px; padding: 1px 0 0 5px; }
dl { display: grid; grid-template-columns: 110px 1fr; grid-auto-rows: 22px; line-height: 22px; padding: 2px 0 0 10px; font-size: 10px; letter-spacing: .5px; }
dt { letter-spacing: .6px; }
.map { position: relative; width: 500px; height: 500px; margin: 16px 0 0 11px; overflow: hidden; letter-spacing: 0; }
.canvas { display: block; font-family: "Liberation Sans", Arial, sans-serif; }
.credit { position: absolute; right: 3px; bottom: 1px; font: 11px/16px "Liberation Sans", Arial, sans-serif; letter-spacing: -.2px; color: #000; white-space: nowrap; }
.credit a { color: #77c; letter-spacing: 0; text-decoration: underline; }

.land { fill: #f2efe9; }
.green { fill: #b5d29c; }
.grey { fill: #ccc; }
.water { fill: #99b3cc; }
.stream path { fill: none; stroke: #b3c9da; stroke-width: 2; }
.stream .wide { stroke: #99b3cc; stroke-width: 5; }
.road path { fill: none; stroke: #fdd27c; stroke-width: 4; stroke-linejoin: round; }
.state path { fill: none; stroke: #9a9a9a; stroke-width: 1; stroke-dasharray: 6 2; }
.state .border { stroke: #777; stroke-width: 1.800; stroke-dasharray: none; }
.state .river { stroke: #888; }
.names text { fill: #222; stroke: #fff; stroke-width: 7px; stroke-linejoin: round; paint-order: stroke; text-rendering: geometricPrecision; }
.names .s { font-size: 27px; }
.names .m { font-size: 33px; fill: #111; }
.names .b { font-size: 35px; font-weight: bold; }
.powered { font-size: 7px; fill: #555; }
.google { font: bold 23px "Liberation Serif", serif; stroke: #fff; stroke-width: .8px; paint-order: stroke; filter: drop-shadow(.5px .5px 0 #567); }
```
